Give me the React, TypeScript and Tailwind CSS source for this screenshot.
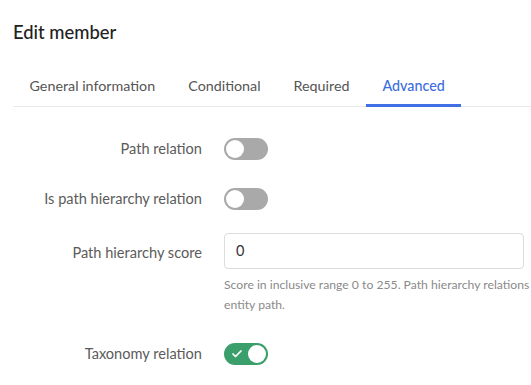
import { Check } from 'lucide-react';

const tabs = ['General information', 'Conditional', 'Required', 'Advanced'];

function Toggle({ on }: { on?: boolean }) {
  return (
    <div
      className={`relative w-[44px] h-[22px] rounded-full flex items-center px-[2px] ${
        on ? 'bg-[#3b9f6c] justify-end' : 'bg-[#a9a9a9] justify-start'
      }`}
    >
      {on && <Check className="absolute left-[7px] top-[5px] w-[12px] h-[12px] text-white" strokeWidth={3.5} />}
      <span className="w-[18px] h-[18px] rounded-full bg-white" />
    </div>
  );
}

function Row({ label, children, className = '', labelClass = '' }: { label: string; children: React.ReactNode; className?: string; labelClass?: string }) {
  return (
    <div className={`flex ${className}`}>
      <div className={`w-[189px] shrink-0 text-right text-[14.6px] text-[#5b5b5b] leading-[22px] whitespace-nowrap ${labelClass}`}>{label}</div>
      <div className="ml-[22px] flex-1">{children}</div>
    </div>
  );
}

export default function App() {
  return (
    <div className="w-[531px] h-[385px] overflow-hidden bg-white pl-[13px] font-['Lato','Open_Sans',sans-serif]">
      <div className="h-[66px] flex items-center text-[18.4px] font-medium text-[#222]">Edit member</div>

      <div className="flex border-b border-[#e9e9e9] w-[560px]">
        {tabs.map((t) => (
          <div
            key={t}
            className={`h-[41px] pt-[2px] px-[16.5px] flex items-center text-[14.3px] -mb-px border-b-[3px] ${
              t === 'Advanced' ? 'text-[#3d6ee0] border-[#4070e4] font-medium' : 'text-[#555] border-transparent'
            }`}
          >
            {t}
          </div>
        ))}
      </div>

      <Row label="Path relation" className="mt-[31px]">
        <Toggle />
      </Row>
      <Row label="Is path hierarchy relation" className="mt-[28px]">
        <Toggle />
      </Row>
      <Row label="Path hierarchy score" className="mt-[23px] items-center" labelClass="pt-[4px]">
        <div className="w-[300px]">
          <div className="h-[36px] border border-[#dcdcdc] rounded-[4px] flex items-center px-[11px] text-[14.5px] text-[#333]">
            0
          </div>
        </div>
      </Row>
      <div className="flex">
        <div className="w-[189px] shrink-0" />
        <div className="ml-[22px] mt-[6px] text-[12.2px] leading-[20px] text-[#8a8a8a] whitespace-nowrap">
          Score in inclusive range 0 to 255. Path hierarchy relations with higher score are preferred for the
          <br />
          entity path.
        </div>
      </div>
      <Row label="Taxonomy relation" className="mt-[28px]">
        <Toggle on />
      </Row>
    </div>
  );
}
